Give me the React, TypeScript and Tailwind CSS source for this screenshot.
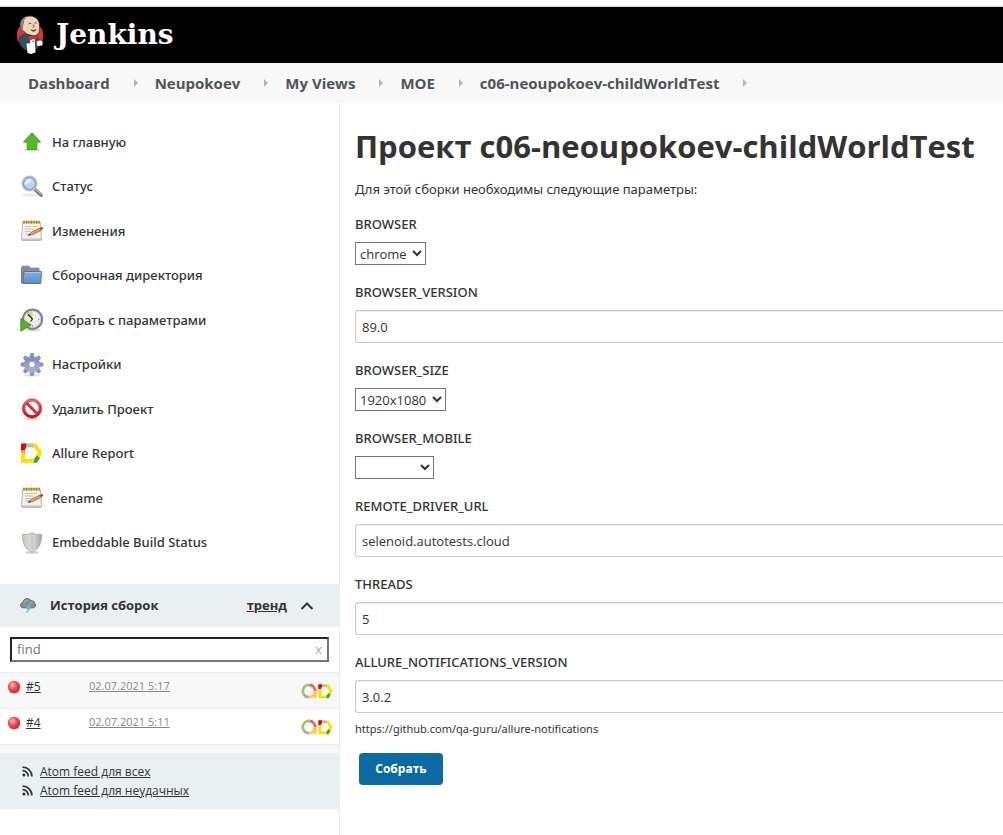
import React from "react";

function Butler() {
  return (
    <svg width="28" height="40" viewBox="0 0 28 40" aria-hidden="true">
      <ellipse cx="14" cy="20" rx="13.2" ry="13.5" fill="#d33833" />
      <path d="M4.500 10C4.500 4 9 1 14 1s9.300 3.500 9.500 9c.2 3 .4 5-.6 7.500-1 2.500-3.600 3.800-6.600 3.500-3-.2-6-1.500-7.500-4C6 16 4.500 13.500 4.500 10z" fill="#f0d6b7" stroke="#2b2a2a" strokeWidth=".8" />
      <path d="M4.500 12C3.500 6 6.500 2 11 1.600 9 3.500 8 5 8 7.500c0 2-1.200 2.500-.9 4.500.2 1.500-.4 2-.4 3.500C5.500 15 4.800 14 4.500 12z" fill="#858386" />
      <path d="M12.500 8.800q1.500-1.200 2.800-.2M18.300 8.200q1.300-1 2.500 0M17 9.500q2.400 2.400-.2 3.200" fill="none" stroke="#3a2a20" strokeWidth=".8" />
      <path d="M14.500 14.500q3 1.200 6-.8-.6 3-3.400 2.800-1.800-.2-2.600-2z" fill="#5a3a2c" />
      <path d="M4 22c2-2 4.500-3.200 7-3l8 2.500c3 .8 4.200 3 4.500 6.500L22 33l-4 3-9-1-4-4C3.500 28 3 24.500 4 22z" fill="#335061" stroke="#1b2830" strokeWidth=".6" />
      <path d="M13 21.500l6.500.5-1 8-4-1z" fill="#fff" />
      <path d="M12.300 20.300l4 2 4.700-2.200.8 5-4.600-1.400-4.400 2z" fill="#d33833" stroke="#73201f" strokeWidth=".5" />
      <circle cx="17.200" cy="26.300" r=".7" fill="#222" />
      <path d="M10.500 28.500l8.500-.3.500 9.300-4.600 1.500-3.400-1z" fill="#fff" />
      <path d="M20.300 26.800c1.500-1.800 4.500-2.300 6.300-.8l.3 3.800c-2 1.700-5 1.900-6.400.7z" fill="#f7f7f7" stroke="#2b2a2a" strokeWidth=".6" />
    </svg>
  );
}

function ArrowUpIcon() {
  return (
    <svg width="24" height="24" viewBox="0 0 24 24" aria-hidden="true">
      <defs>
        <linearGradient id="up" x1="0" y1="0" x2="0" y2="1">
          <stop offset="0" stopColor="#5fae42" />
          <stop offset="1" stopColor="#54c00d" />
        </linearGradient>
      </defs>
      <ellipse cx="12" cy="20" rx="9" ry="1.500" fill="#000" opacity=".14" />
      <path d="M12 2.800L20.500 12h-3.700v7.500H7.200V12H3.500z" fill="url(#up)" stroke="#3f9420" strokeWidth=".9" strokeLinejoin="round" />
    </svg>
  );
}

function SearchIcon() {
  return (
    <svg width="24" height="24" viewBox="0 0 24 24" aria-hidden="true">
      <ellipse cx="10" cy="20" rx="8" ry="1.800" fill="#000" opacity=".08" />
      <path d="M15.500 15l5.500 5" stroke="#767676" strokeWidth="3.600" strokeLinecap="round" />
      <path d="M15.500 14.500l5.500 4.800" stroke="#b5b5b5" strokeWidth="1.400" strokeLinecap="round" />
      <circle cx="9.500" cy="8.500" r="7" fill="#bdd7f5" stroke="#b9bdc2" strokeWidth="2" />
      <circle cx="9.500" cy="8.500" r="5.900" fill="#bcd5f4" stroke="#5f86bd" strokeWidth=".8" />
      <path d="M5 9C5 5.500 8 3.700 11.500 4.300 11 7.500 8.500 9 5 9z" fill="#e3effc" />
    </svg>
  );
}

function NotepadIcon() {
  return (
    <svg width="24" height="24" viewBox="0 0 24 24" aria-hidden="true">
      <path d="M2.800 3h17.400l1.400 17-.8 1.500H2.200L1.400 20z" fill="#f1f1ef" stroke="#a6a6a6" strokeWidth=".8" />
      <path d="M1.500 19.500h20l-.8 2H2.300z" fill="#c4c4c0" />
      <path d="M3 2h17v2.500H3z" fill="#cdb548" />
      <path d="M4 1.500v3M6.500 1.500v3M9 1.500v3M11.500 1.500v3M14 1.500v3M16.500 1.500v3M19 1.500v3" stroke="#958021" strokeWidth="1" />
      <path d="M5 7.500h12M5 10h9M5 12.500h6M5 15h4" stroke="#c4c4c4" strokeWidth="1" />
      <path d="M8 16.500l3.500-3.500 8.500-4 1.200 2.400-8.700 4.400z" fill="#e2a04b" stroke="#8b5a1f" strokeWidth=".6" />
      <path d="M8 16.500l2-2 .8 1.300z" fill="#333" />
      <path d="M19.500 9.200l2-1.100 1.600.5v1.300l-2 1.200z" fill="#d92e1c" />
    </svg>
  );
}

function FolderIcon() {
  return (
    <svg width="24" height="24" viewBox="0 0 24 24" aria-hidden="true">
      <defs>
        <linearGradient id="folder" x1="0" y1="0" x2="0" y2="1">
          <stop offset="0" stopColor="#88b0e0" />
          <stop offset="1" stopColor="#5d8cc6" />
        </linearGradient>
      </defs>
      <path d="M1.500 19V3.500l1-1.300H9l1.200 2H19V19z" fill="#8c8c8c" stroke="#707070" strokeWidth=".8" />
      <path d="M2.800 19.500L4 7.500h17.600l-.8 12z" fill="url(#folder)" stroke="#3c6ca8" strokeWidth=".8" strokeLinejoin="round" />
      <path d="M4.800 8.500h16" stroke="#b2cdee" strokeWidth=".7" />
    </svg>
  );
}

function ClockIcon() {
  return (
    <svg width="24" height="24" viewBox="0 0 24 24" aria-hidden="true">
      <ellipse cx="13" cy="22" rx="8" ry="1.500" fill="#000" opacity=".15" />
      <circle cx="12.500" cy="11.300" r="9.600" fill="#eeeee8" stroke="#7f7e9a" strokeWidth="2.200" />
      <circle cx="12.500" cy="11.300" r="8.200" fill="none" stroke="#c9c9d2" strokeWidth=".8" />
      <path d="M12.500 11L6.500 6Q9 3.500 12.500 3.700z" fill="#e8cc6d" />
      <path d="M8 6.500l4.500 4.500-2 2.500" stroke="#222" strokeWidth="1.200" fill="none" />
      <path d="M19.200 11.300H18M12.500 18.500v-1.200" stroke="#777" strokeWidth="1" />
      <path d="M.8 10.500v12.700l10.500-6.300z" fill="#58b322" stroke="#328414" strokeWidth=".8" strokeLinejoin="round" />
    </svg>
  );
}

function GearIcon() {
  const teeth = [0, 45, 90, 135, 180, 225, 270, 315];
  return (
    <svg width="24" height="24" viewBox="0 0 24 24" aria-hidden="true">
      <defs>
        <linearGradient id="gear" gradientUnits="userSpaceOnUse" x1="12" y1="1" x2="12" y2="22">
          <stop offset="0" stopColor="#7288b4" />
          <stop offset="1" stopColor="#b4b4e0" />
        </linearGradient>
      </defs>
      <ellipse cx="12" cy="22.300" rx="8" ry="1.300" fill="#000" opacity=".12" />
      {teeth.map((a) => (
        <path key={a} d="M9.800 5l.9-4.500h2.600l.9 4.500z" fill="#8d9ac4" stroke="#65749f" strokeWidth=".6" transform={`rotate(${a} 12 11.500)`} />
      ))}
      <circle cx="12" cy="11.500" r="5.600" fill="none" stroke="url(#gear)" strokeWidth="4.600" />
      <circle cx="12" cy="11.500" r="3.200" fill="#fff" stroke="#6c7aa6" strokeWidth=".7" />
    </svg>
  );
}

function ForbiddenIcon() {
  return (
    <svg width="24" height="24" viewBox="0 0 24 24" aria-hidden="true">
      <defs>
        <linearGradient id="stop" x1="0" y1="0" x2="0" y2="1">
          <stop offset="0" stopColor="#e36b6b" />
          <stop offset="1" stopColor="#cf1111" />
        </linearGradient>
      </defs>
      <ellipse cx="12" cy="21.500" rx="8" ry="1.300" fill="#000" opacity=".15" />
      <circle cx="12" cy="11.500" r="8.200" fill="#fff" stroke="url(#stop)" strokeWidth="3" />
      <path d="M6.500 6l11 11" stroke="#d73333" strokeWidth="3" />
      <circle cx="12" cy="11.500" r="9.700" fill="none" stroke="#b92525" strokeWidth=".6" />
    </svg>
  );
}

function AllureIcon() {
  return (
    <svg width="24" height="24" viewBox="0 0 24 24" aria-hidden="true">
      <path d="M3 5v13.700h12L20 11l-4.800-7.600H12" fill="none" stroke="#ffe000" strokeWidth="4" />
      <path d="M5 3.400h8" stroke="#97d0a5" strokeWidth="4" />
      <path d="M1 1.400h5.200v3L5 8H1z" fill="#e3000f" />
      <path d="M1 8h4v4L1 9.500z" fill="#f5a800" />
      <path d="M14.500 16.500l2.500-3 3 2.500-3 4.700h-3.500z" fill="#3fa648" />
    </svg>
  );
}

function ShieldIcon() {
  return (
    <svg width="24" height="24" viewBox="0 0 24 24" aria-hidden="true">
      <defs>
        <linearGradient id="shield" x1="0" y1="0" x2="1" y2="0">
          <stop offset="0" stopColor="#c4c4c1" />
          <stop offset=".5" stopColor="#dcdcd9" />
          <stop offset="1" stopColor="#a4a4a1" />
        </linearGradient>
      </defs>
      <ellipse cx="12" cy="21.500" rx="7" ry="1.300" fill="#000" opacity=".18" />
      <path d="M12 1.300C9.500 3.300 6 4 2.200 3.300c0 8 2.300 14.500 9.800 18.200 7.500-3.700 9.800-10.200 9.800-18.200C18 4 14.500 3.300 12 1.300z" fill="url(#shield)" stroke="#adadaa" strokeWidth=".8" />
      <path d="M12 3v16.500" stroke="#8b8b88" strokeWidth="1" strokeDasharray="1.200 1.500" />
    </svg>
  );
}

function StormIcon() {
  return (
    <svg width="16" height="16" viewBox="0 0 16 16" aria-hidden="true">
      <path d="M3 9.800C.8 9.500 0 8 .5 6.500 1 5 2 4.600 3 4.600 3.200 2 5 .6 7.200.6c1.800 0 3 .8 3.600 2.200 2-.4 3.600.6 3.800 2.400 1.400.6 1.600 3-.1 4.100-1 .7-2.500.5-2.500.5z" fill="#8b8e90" stroke="#505456" strokeWidth=".8" />
      <path d="M3.500 5.500Q4.500 2 7.500 2M9.500 5q1.500-1.500 3.500-.5" fill="none" stroke="#b4b7b9" strokeWidth="1" />
      <path d="M9.500 6L5.300 10.800h2.500l-2 5.200 5.900-6.700H9.300l2.300-3.300z" fill="#4fc0f5" />
    </svg>
  );
}

const ringSegments = [
  { color: "#ffc84a", dash: "27 73", offset: 0 },
  { color: "#aaaaaa", dash: "15 85", offset: -26 },
  { color: "#97cc64", dash: "35 65", offset: -41 },
  { color: "#fd5a3e", dash: "13 87", offset: -76 },
  { color: "#d35ebe", dash: "11 89", offset: -89 },
];

function AllureBadge() {
  return (
    <svg width="32" height="16" viewBox="0 0 32 16" aria-hidden="true">
      {ringSegments.map((s) => (
        <circle key={s.color} cx="8" cy="8" r="6.200" fill="none" stroke={s.color} strokeWidth="2.800" pathLength="100" strokeDasharray={s.dash} strokeDashoffset={s.offset} />
      ))}
      <path d="M14.200 8v7.200" stroke="#ffc84a" strokeWidth="2.800" />
      <path d="M18.800 4v9.800h7.700L30 8.200 26.800 2.800H25" fill="none" stroke="#ffe000" strokeWidth="2.800" />
      <path d="M20 2.700h5.500" stroke="#97d0a5" strokeWidth="2.800" />
      <path d="M17.300 1.300H21v2.200L19.800 6h-2.500z" fill="#e3000f" />
      <path d="M25.500 12.500l2-2.300 2.300 1.600-2.200 3.500h-2.100z" fill="#3fa648" />
    </svg>
  );
}

function RedBall() {
  return (
    <svg width="14" height="14" viewBox="0 0 14 14" aria-hidden="true">
      <defs>
        <radialGradient id="ball" cx=".38" cy=".35" r=".65">
          <stop offset="0" stopColor="#ffc4c4" />
          <stop offset=".55" stopColor="#f04a4a" />
          <stop offset="1" stopColor="#d02828" />
        </radialGradient>
      </defs>
      <ellipse cx="7" cy="12.800" rx="5" ry="1" fill="#000" opacity=".15" />
      <circle cx="7" cy="7" r="6.200" fill="url(#ball)" />
    </svg>
  );
}

function FeedIcon() {
  return (
    <svg width="11" height="11" viewBox="0 0 11 11" aria-hidden="true" fill="none" stroke="#333" strokeWidth="1.700">
      <circle cx="1.900" cy="9.100" r="1.500" fill="#333" stroke="none" />
      <path d="M.5 4.700A5.800 5.800 0 0 1 6.300 10.600M.5 1.200A9.300 9.300 0 0 1 9.900 10.600" />
    </svg>
  );
}

const crumbs = ["Dashboard", "Neupokoev", "My Views", "MOE", "c06-neoupokoev-childWorldTest"];

const tasks = [
  { label: "На главную", Icon: ArrowUpIcon },
  { label: "Статус", Icon: SearchIcon },
  { label: "Изменения", Icon: NotepadIcon },
  { label: "Сборочная директория", Icon: FolderIcon },
  { label: "Собрать с параметрами", Icon: ClockIcon },
  { label: "Настройки", Icon: GearIcon },
  { label: "Удалить Проект", Icon: ForbiddenIcon },
  { label: "Allure Report", Icon: AllureIcon },
  { label: "Rename", Icon: NotepadIcon },
  { label: "Embeddable Build Status", Icon: ShieldIcon },
];

const builds = [
  { id: "#5", date: "02.07.2021 5:17", row: "bg-[#f8f8f8]" },
  { id: "#4", date: "02.07.2021 5:11", row: "bg-white" },
];

type Param = { name: string; value: string; select?: string; note?: string };

const params: Param[] = [
  { name: "BROWSER", value: "chrome", select: "w-[71px]" },
  { name: "BROWSER_VERSION", value: "89.0" },
  { name: "BROWSER_SIZE", value: "1920x1080", select: "w-[91px]" },
  { name: "BROWSER_MOBILE", value: "", select: "w-[79px]" },
  { name: "REMOTE_DRIVER_URL", value: "selenoid.autotests.cloud" },
  { name: "THREADS", value: "5" },
  { name: "ALLURE_NOTIFICATIONS_VERSION", value: "3.0.2", note: "https://github.com/qa-guru/allure-notifications" },
];

function Field({ name, value, select, note }: Param) {
  return (
    <div className="flex flex-col items-start">
      <label htmlFor={name} className="mb-2 font-['Noto_Sans',sans-serif] text-[13px] leading-5 font-medium">
        {name}
      </label>
      {select ? (
        <select id={name} defaultValue={value} className={`h-[23px] border border-[#767676] bg-white text-[13px] ${select}`}>
          <option value={value}>{value}</option>
        </select>
      ) : (
        <input
          id={name}
          type="text"
          defaultValue={value}
          className="h-[33px] w-full rounded-l-[3px] border border-r-0 border-[#ccc] bg-white px-1.5 text-[13px] shadow-[inset_0_1px_1px_rgba(0,0,0,0.075)]"
        />
      )}
      {note && <p className="mt-1.5 font-['Noto_Sans',sans-serif] text-[11px] leading-5">{note}</p>}
    </div>
  );
}

export default function App() {
  return (
    <div className="flex min-h-screen flex-col bg-white font-['Open_Sans','Noto_Sans',sans-serif] text-[13px] text-[#333]">
      <div className="h-[7px] border-b border-[#dadce0]" />
      <header className="flex h-14 items-center bg-black px-4">
        <a href="#" className="flex items-center gap-3">
          <Butler />
          <span className="font-['DejaVu_Serif',serif] text-[28px] leading-8 font-bold text-white">Jenkins</span>
        </a>
      </header>
      <nav className="flex h-10 items-center bg-[#f8f8f8] px-7 text-[15px] font-bold text-[#4d545d]">
        {crumbs.map((c) => (
          <React.Fragment key={c}>
            <a href="#">{c}</a>
            <svg width="4" height="8" viewBox="0 0 4 8" className="mr-[17px] ml-6" aria-hidden="true">
              <path d="M0 0l4 4-4 4z" fill="#b5b5b5" />
            </svg>
          </React.Fragment>
        ))}
      </nav>

      <div className="flex flex-1">
        <aside className="w-[340px] shrink-0 border-r border-[#e9eef1]">
          <ul className="mt-[17px] flex h-[445px] flex-col pl-5">
            {tasks.map(({ label, Icon }) => (
              <li key={label} className="flex flex-1 items-center">
                <a href="#" className="flex items-center gap-2 font-['Noto_Sans',sans-serif] font-medium">
                  <Icon />
                  {label}
                </a>
              </li>
            ))}
          </ul>

          <section className="mt-[19px]">
            <div className="flex h-[43px] items-center bg-[#eaeff2] pr-[25px] pl-5">
              <StormIcon />
              <h2 className="ml-3.5 flex-1 font-bold">История сборок</h2>
              <a href="#" className="font-bold underline">
                тренд
              </a>
              <button type="button" aria-label="Свернуть" className="ml-[13px]">
                <svg width="14" height="8" viewBox="0 0 14 8" fill="none" stroke="#333" strokeWidth="2" aria-hidden="true">
                  <path d="M1.500 7L7 1.500 12.500 7" />
                </svg>
              </button>
            </div>
            <div className="px-2.5 py-2.5">
              <div className="flex h-[25px] items-center border-2 border-t-[#222] border-r-[#767676] border-b-[#767676] border-l-[#222] bg-white px-[5px]">
                <input type="text" placeholder="find" aria-label="find" className="min-w-0 flex-1 outline-none placeholder:text-[#757575]" />
                <button type="button" className="text-[#aaa]">
                  x
                </button>
              </div>
            </div>
            <table className="w-full border-collapse border-y border-[#e9eef1] text-[12px]">
              <tbody>
                {builds.map((b) => (
                  <tr key={b.id} className={`h-9 border-b border-[#e9eef1] ${b.row}`}>
                    <td className="w-[89px] pb-2 pl-[7px]">
                      <span className="flex items-center gap-[5px]">
                        <RedBall />
                        <a href="#" className="underline">
                          {b.id}
                        </a>
                      </span>
                    </td>
                    <td className="pb-2 text-[11px] text-[#888]">
                      <a href="#" className="underline">
                        {b.date}
                      </a>
                    </td>
                    <td className="w-[38px]">
                      <AllureBadge />
                    </td>
                  </tr>
                ))}
              </tbody>
            </table>
            <div className="h-2 bg-[#f8f8f8]" />
            <ul className="flex h-14 flex-col justify-center bg-[#eaeff2] pl-[22px] text-[12px] leading-[19px]">
              {["Atom feed для всех", "Atom feed для неудачных"].map((t) => (
                <li key={t}>
                  <a href="#" className="flex items-center gap-[7px]">
                    <FeedIcon />
                    <span className="underline">{t}</span>
                  </a>
                </li>
              ))}
            </ul>
          </section>
        </aside>

        <main className="min-w-0 flex-1 pt-6 pl-[15px]">
          <h1 className="text-[31px] leading-[38px] font-bold whitespace-nowrap">Проект c06-neoupokoev-childWorldTest</h1>
          <p className="mt-3.5 font-['Noto_Sans',sans-serif] leading-5">Для этой сборки необходимы следующие параметры:</p>
          <form className="mt-[15px] flex flex-col gap-[17px]" onSubmit={(e) => e.preventDefault()}>
            {params.map((p) => (
              <Field key={p.name} {...p} />
            ))}
            <button type="submit" className="-mt-[3px] ml-1 h-8 w-[84px] rounded bg-[#0b6aa2] text-[12px] font-bold text-white">
              Собрать
            </button>
          </form>
        </main>
      </div>
    </div>
  );
}
